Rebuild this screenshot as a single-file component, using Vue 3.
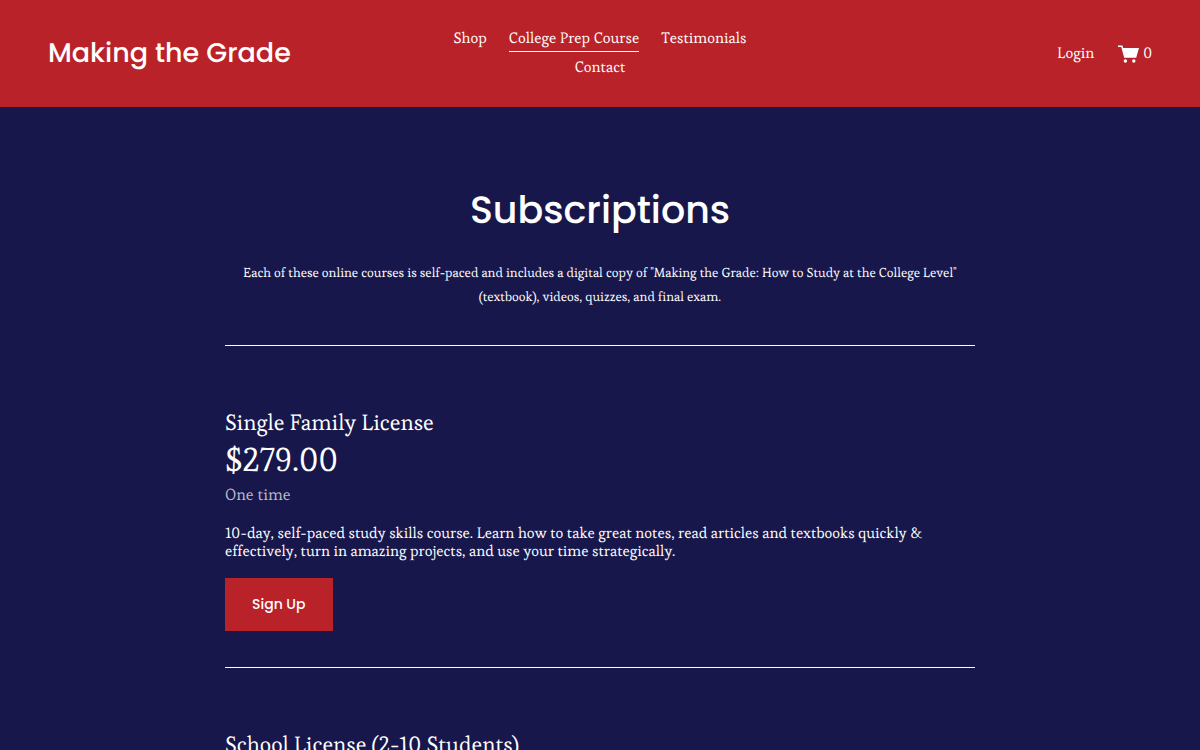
<script setup>
const navLinks = [
  { label: 'Shop' },
  { label: 'College Prep Course', active: true },
  { label: 'Testimonials' },
  { label: 'Contact' }
]
</script>

<template>
  <header class="header">
    <a class="brand" href="#">Making the Grade</a>
    <nav class="nav">
      <a v-for="l in navLinks" :key="l.label" href="#" :class="{ active: l.active }">{{ l.label }}</a>
    </nav>
    <div class="actions">
      <a href="#">Login</a>
      <a class="cart" href="#" aria-label="Cart, 0 items">
        <svg viewBox="0 0 21 18" width="21" height="18" aria-hidden="true">
          <path d="M0 0.4H4.4L5.2 3H21L18.2 12.8H6.2L3.3 2H0Z" fill="#fff" />
          <circle cx="7.4" cy="16" r="1.7" fill="#fff" />
          <circle cx="15.8" cy="16" r="1.7" fill="#fff" />
        </svg>
        <span>0</span>
      </a>
    </div>
  </header>
  <main class="main">
    <h1>Subscriptions</h1>
    <p class="intro">Each of these online courses is self-paced and includes a digital copy of "Making the Grade: How to Study at the College Level" (textbook), videos, quizzes, and final exam.</p>
    <section class="plan">
      <h2>Single Family License</h2>
      <p class="price">$279.00</p>
      <p class="term">One time</p>
      <p class="desc">10-day, self-paced study skills course. Learn how to take great notes, read articles and textbooks quickly &amp; effectively, turn in amazing projects, and use your time strategically.</p>
      <button type="button">Sign Up</button>
    </section>
    <section class="plan">
      <h2>School License (2-10 Students)</h2>
    </section>
  </main>
</template>

<style>
body { background: #18174c; text-rendering: geometricPrecision; }
</style>

<style scoped>
.header {
  display: grid;
  grid-template-columns: 1fr 312px 1fr;
  align-items: center;
  padding: 24px 48px;
  background: #b92228;
  color: #fff;
  font: 15px/29px Esteban, "Liberation Serif", serif;
}
a { color: inherit; text-decoration: none; }
.brand { font: 500 27px/43px Poppins, Inter, sans-serif; white-space: nowrap; }
.nav { display: flex; flex-wrap: wrap; justify-content: center; column-gap: 22px; padding-top: 1px; }
.nav a { padding-top: 2px; line-height: 24px; border-bottom: 1px solid transparent; margin-bottom: 2px; }
.nav .active { border-color: #fff; }
.actions { display: flex; justify-content: flex-end; align-items: center; gap: 24px; }
.cart { display: flex; align-items: center; gap: 4px; }
.main {
  max-width: 750px;
  margin: 0 auto;
  padding: 77px 24px 0;
  color: #fff;
  font-family: Esteban, "Liberation Serif", serif;
}
h1 { margin: 0; text-align: center; font: 500 38px/54px Poppins, Inter, sans-serif; }
p { margin: 0; }
.intro { margin: 23px 0 36px; text-align: center; font-size: 13px; line-height: 24px; }
.plan { border-top: 1px solid #fff; padding: 60px 0 36px; }
h2 { margin: 0; font-weight: 400; font-size: 22px; line-height: 34px; }
.price { font-size: 33px; line-height: 40px; }
.term { font-size: 16px; line-height: 30px; color: #b9b9c9; }
.desc { margin: 15px 0 17px; font-size: 15px; line-height: 18px; }
button { padding: 16px 27px; border: 0; background: #b92228; color: #fff; font: 500 14px/21px Poppins, Inter, sans-serif; }
</style>
